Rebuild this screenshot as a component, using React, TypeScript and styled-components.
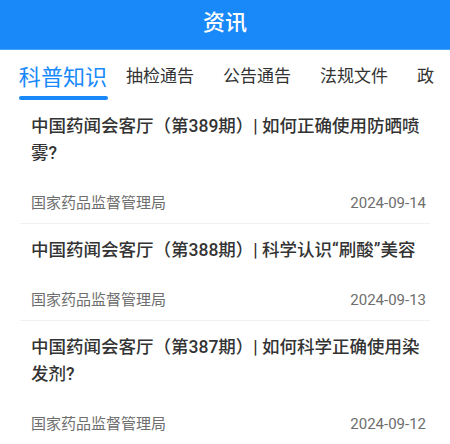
import React from "react";
import styled, { createGlobalStyle } from "styled-components";

const Global = createGlobalStyle`
  html, body { margin: 0; padding: 0; background: #fff; }
  body { font-family: Roboto, "Noto Sans CJK SC", "Noto Sans", sans-serif; overflow: hidden; }
  * { box-sizing: border-box; }
`;

const Page = styled.div`
  width: 450px;
  height: 444px;
  overflow: hidden;
  background: #fff;
`;

const Header = styled.header`
  height: 50px;
  background: #1989fa;
  border-bottom: 1px solid #4aa3fb;
  display: flex;
  justify-content: center;
  align-items: flex-start;
  padding-top: 5px;
`;

const HeaderTitle = styled.h1`
  margin: 0;
  color: #fff;
  font-family: "Noto Sans CJK SC", sans-serif;
  font-size: 22px;
  font-weight: 500;
  line-height: 30px;
`;

const TabBar = styled.nav`
  width: 435px;
  height: 50px;
  display: flex;
  gap: 29px;
  padding-left: 29px;
  white-space: nowrap;
  overflow: hidden;
`;

const Tab = styled.div<{ $active?: boolean }>`
  position: relative;
  flex: none;
  display: flex;
  align-items: center;
  height: 50px;
  &::after {
    content: "";
    display: ${(p) => (p.$active ? "block" : "none")};
    position: absolute;
    left: 50%;
    bottom: 0;
    width: 89px;
    height: 4px;
    margin-left: -44.5px;
    border-radius: 2px;
    background: #1989fa;
  }
`;

const TabLabel = styled.span<{ $active?: boolean }>`
  font-family: "Noto Sans CJK SC", sans-serif;
  font-size: 17px;
  line-height: 24px;
  color: ${(p) => (p.$active ? "#1989fa" : "#333")};
  transform: ${(p) => (p.$active ? "scale(1.3)" : "none")};
  transform-origin: center;
  margin-top: ${(p) => (p.$active ? "2px" : "0")};
`;

const List = styled.ul`
  list-style: none;
  margin: 0;
  padding: 0 20px;
`;

const Item = styled.li`
  padding: 13px 4px 10px 11px;
  border-bottom: 1px solid #f2f2f2;
  display: flex;
  flex-direction: column;
`;

const Title = styled.h2`
  margin: 0;
  font-family: Roboto, "Noto Sans CJK SC", sans-serif;
  font-size: 17.5px;
  font-weight: 500;
  line-height: 27px;
  color: #333;
`;

const Meta = styled.div`
  margin-top: 26px;
  display: flex;
  justify-content: space-between;
  font-family: Roboto, "Noto Sans CJK SC", sans-serif;
  font-size: 15px;
  line-height: 20px;
  color: #6e6e6e;
`;

const tabs = ["科普知识", "抽检通告", "公告通告", "法规文件", "政策解读"];

const items = [
  { title: "中国药闻会客厅（第389期）| 如何正确使用防晒喷雾?", date: "2024-09-14" },
  { title: "中国药闻会客厅（第388期）| 科学认识“刷酸”美容", date: "2024-09-13" },
  { title: "中国药闻会客厅（第387期）| 如何科学正确使用染发剂?", date: "2024-09-12" },
];

export default function App() {
  return (
    <Page>
      <Global />
      <Header>
        <HeaderTitle>资讯</HeaderTitle>
      </Header>
      <TabBar>
        {tabs.map((t, i) => (
          <Tab key={t} $active={i === 0}>
            <TabLabel $active={i === 0}>{t}</TabLabel>
          </Tab>
        ))}
      </TabBar>
      <List>
        {items.map((it) => (
          <Item key={it.date}>
            <Title>{it.title}</Title>
            <Meta>
              <span>国家药品监督管理局</span>
              <span>{it.date}</span>
            </Meta>
          </Item>
        ))}
      </List>
    </Page>
  );
}
